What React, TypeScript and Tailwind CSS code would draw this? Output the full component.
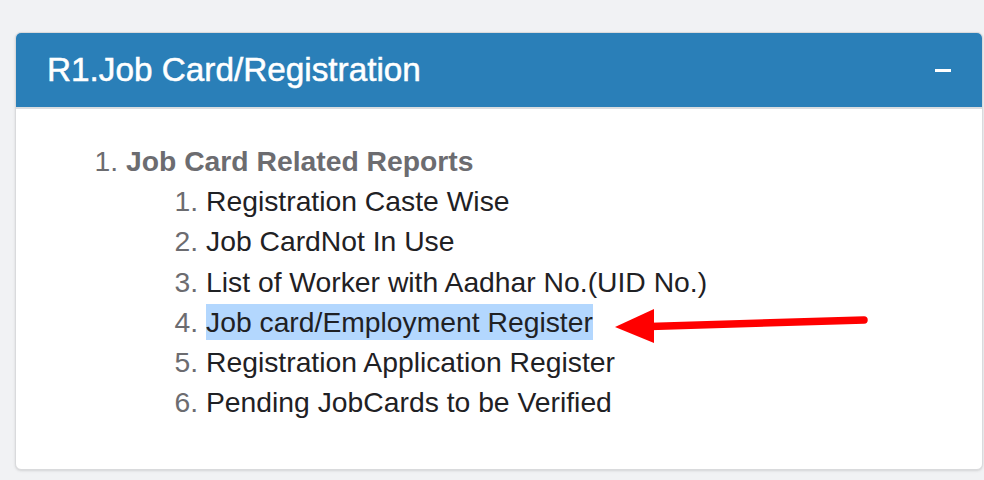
import React from "react";

const subReports = [
  "Registration Caste Wise",
  "Job CardNot In Use",
  "List of Worker with Aadhar No.(UID No.)",
  "Job card/Employment Register",
  "Registration Application Register",
  "Pending JobCards to be Verified",
];

/* -----------------------------
   Annotation arrow (overlay)
----------------------------- */
const RedArrow = () => (
  <svg
    className="absolute left-0 top-0 pointer-events-none"
    width="984"
    height="480"
    viewBox="0 0 984 480"
  >
    <line
      x1="864"
      y1="320"
      x2="650"
      y2="326.5"
      stroke="#ff0000"
      strokeWidth="7.5"
      strokeLinecap="round"
    />
    <polygon points="615,327 654,309 654,343" fill="#ff0000" />
  </svg>
);

export default function App() {
  return (
    <div
      className="relative min-h-[480px] bg-[#f1f2f4] pt-[32px] pl-[15px] pr-[1px]"
      style={{ fontFamily: '"Liberation Sans", Arial, sans-serif' }}
    >
      <div className="rounded-[6px] border border-[#d9dadc] bg-white shadow-sm overflow-hidden">
        {/* Header */}
        <div className="flex h-[76px] items-center justify-between bg-[#2a7fb8] border-b-2 border-[#dadde0] pl-[31px] pr-[31px]">
          <h3 className="text-[33.3px] leading-none text-white [-webkit-text-stroke:0.5px_white]">
            R1.Job Card/Registration
          </h3>
          <span className="block h-[3px] w-[16px] bg-white" />
        </div>

        {/* Body */}
        <div className="pt-[32px] pb-[47px] px-[30px]">
          <ol className="list-decimal pl-[80px] text-[28.3px] leading-[40.2px] marker:text-[#6c6c70]">
            <li>
              <span className="font-bold text-[#6c6c70]">
                Job Card Related Reports
              </span>
              <ol className="list-decimal pl-[80px] marker:text-[#6c6c70]">
                {subReports.map((name, i) => (
                  <li key={name} className="text-[#1f2124]">
                    {i === 3 ? (
                      <span className="bg-[#b3d7fe] py-[2px]">{name}</span>
                    ) : (
                      name
                    )}
                  </li>
                ))}
              </ol>
            </li>
          </ol>
        </div>
      </div>

      <RedArrow />
    </div>
  );
}
